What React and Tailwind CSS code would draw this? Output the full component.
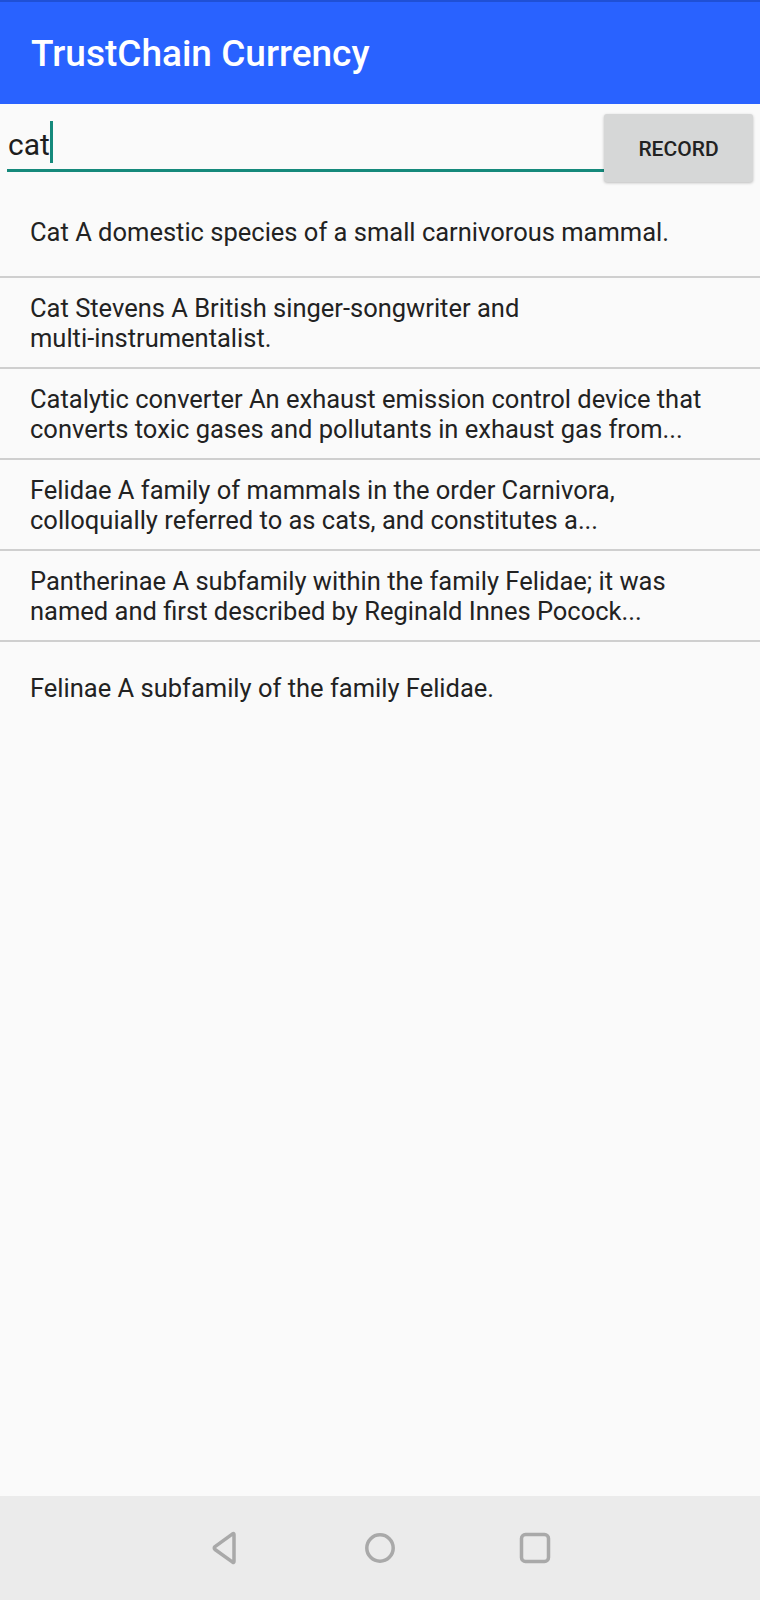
import React from "react";

const items = [
  "Cat A domestic species of a small carnivorous mammal.",
  <>
    Cat Stevens A British singer-songwriter and{" "}
    <span className="whitespace-nowrap">multi-instrumentalist.</span>
  </>,
  "Catalytic converter An exhaust emission control device that converts toxic gases and pollutants in exhaust gas from...",
  "Felidae A family of mammals in the order Carnivora, colloquially referred to as cats, and constitutes a...",
  "Pantherinae A subfamily within the family Felidae; it was named and first described by Reginald Innes Pocock...",
  "Felinae A subfamily of the family Felidae.",
];

export default function App() {
  return (
    <div
      className="w-[760px] h-[1600px] flex flex-col bg-[#fafafa] overflow-hidden"
      style={{ fontFamily: "Roboto, 'Noto Sans', sans-serif" }}
    >
      <header className="h-[104px] shrink-0 bg-[#2962ff] border-t-2 border-[#1f50d6] flex items-center pl-[31px] pt-[0px]">
        <h1 className="text-white text-[37px] font-medium leading-none">
          TrustChain Currency
        </h1>
      </header>

      <div className="flex items-start pl-[7px] pr-[7px] pt-[10px] h-[83px] shrink-0">
        <div className="flex-1 h-[58px] border-b-[3px] border-[#15897b] flex items-end pb-[9px] pl-[1px]">
          <span className="text-[30px] leading-none text-[#1e1e1e]">cat</span>
          <span className="w-[3px] h-[42px] bg-[#15897b] mb-[-3px]"></span>
        </div>
        <button className="w-[149px] h-[68px] bg-[#d6d7d7] rounded-[3px] shadow-[0_1px_3px_rgba(0,0,0,0.25)] text-[21px] font-medium text-[#222222] flex items-center justify-center pt-[4px]">
          RECORD
        </button>
      </div>

      <ul className="flex flex-col">
        {items.map((t, i) => (
          <li
            key={i}
            className={
              "h-[91px] flex items-center px-[30px] " +
              (i < items.length - 1 ? "border-b-2 border-[#cfcfcf]" : "")
            }
          >
            <p className="text-[25.5px] leading-[30px] text-[#222222]">{t}</p>
          </li>
        ))}
      </ul>

      <div className="flex-1"></div>

      <nav className="h-[104px] shrink-0 bg-[#ebebeb] flex items-center justify-center">
        <div className="w-[155px] flex justify-center">
          <svg width="30" height="34" viewBox="0 0 30 34">
            <path
              d="M24 3.5 L24 30.5 Q24 32 22.6 31.2 L5 18.5 Q3.5 17 5 15.6 L22.6 2.8 Q24 2 24 3.5 Z"
              fill="none"
              stroke="#a9a9a9"
              strokeWidth="3.5"
              strokeLinejoin="round"
            />
          </svg>
        </div>
        <div className="w-[155px] flex justify-center">
          <svg width="32" height="32" viewBox="0 0 32 32">
            <circle cx="16" cy="16" r="13.2" fill="none" stroke="#a9a9a9" strokeWidth="3.5" />
          </svg>
        </div>
        <div className="w-[155px] flex justify-center">
          <svg width="32" height="32" viewBox="0 0 32 32">
            <rect x="2.5" y="2.5" width="27" height="27" rx="4" fill="none" stroke="#a9a9a9" strokeWidth="3.5" />
          </svg>
        </div>
      </nav>
    </div>
  );
}
